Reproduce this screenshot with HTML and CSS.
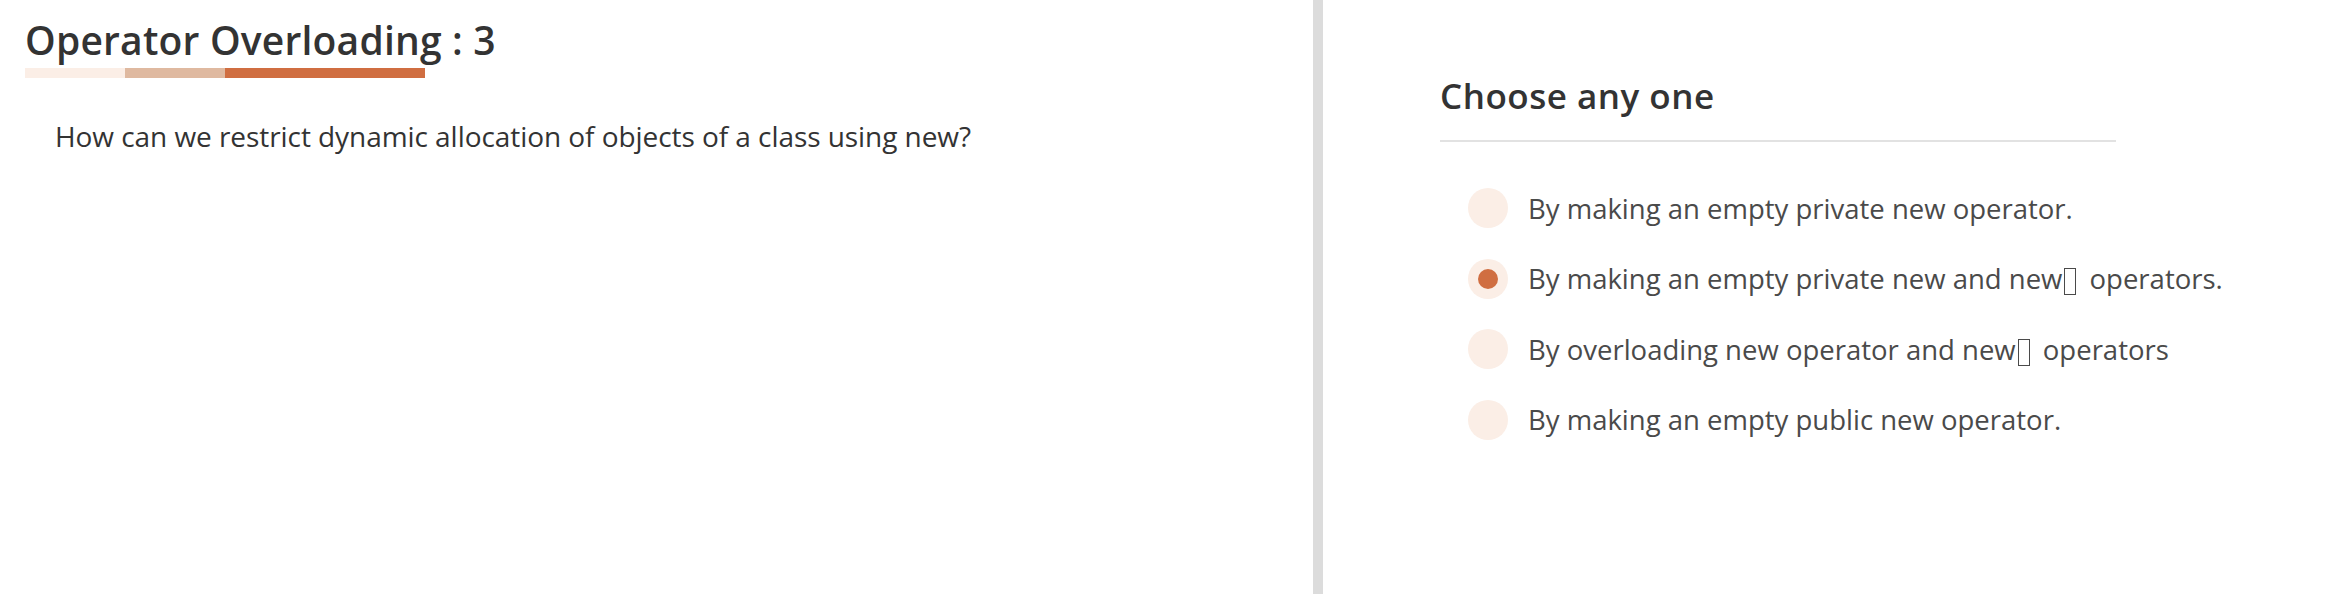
FILE: index.html
```html
<!DOCTYPE html>
<html lang="en">
<head>
<meta charset="utf-8">
<title>Operator Overloading : 3</title>
<link rel="stylesheet" href="styles.css">
</head>
<body>
<div class="page">
  <section class="question-panel">
    <h1 class="title">Operator Overloading : 3</h1>
    <div class="progress">
      <span class="seg seg-light"></span>
      <span class="seg seg-mid"></span>
      <span class="seg seg-dark"></span>
    </div>
    <p class="question">How can we restrict dynamic allocation of objects of a class using new?</p>
  </section>
  <div class="divider"></div>
  <section class="answer-panel">
    <h2 class="choose">Choose any one</h2>
    <div class="rule"></div>
    <ul class="options">
      <li class="option"><span class="radio"></span><span class="label">By making an empty private new operator.</span></li>
      <li class="option selected"><span class="radio"><span class="dot"></span></span><span class="label">By making an empty private new and new<span class="tofu"></span> operators.</span></li>
      <li class="option"><span class="radio"></span><span class="label">By overloading new operator and new<span class="tofu"></span> operators</span></li>
      <li class="option"><span class="radio"></span><span class="label">By making an empty public new operator.</span></li>
    </ul>
  </section>
</div>
</body>
</html>
```

FILE: styles.css
```css
html, body {
  margin: 0;
  padding: 0;
  background: #ffffff;
}
body {
  font-family: "Open Sans", "Noto Sans", sans-serif;
  color: #333333;
}
.page {
  display: flex;
  height: 594px;
}
.question-panel {
  width: 1313px;
  box-sizing: border-box;
  padding: 20px 0 0 25px;
}
.title {
  margin: 0;
  font-size: 39px;
  line-height: 39px;
  font-weight: 600;
  color: #333333;
  letter-spacing: 0.2px;
}
.progress {
  display: flex;
  margin-top: 9px;
  height: 10px;
}
.seg { height: 10px; }
.seg-light { width: 100px; background: #fbeee6; }
.seg-mid { width: 100px; background: #dfb9a0; }
.seg-dark { width: 200px; background: #d06e41; }
.question {
  margin: 39.5px 0 0 30px;
  font-size: 28px;
  line-height: 36px;
  color: #333333;
  letter-spacing: -0.06px;
}
.divider {
  width: 10px;
  background: #dcdcdc;
  flex: none;
}
.answer-panel {
  flex: 1;
  padding: 75px 0 0 117px;
}
.choose {
  margin: 0;
  font-size: 35px;
  line-height: 42px;
  font-weight: 600;
  color: #333333;
  letter-spacing: 0.5px;
}
.rule {
  width: 676px;
  height: 2px;
  background: #e2e2e2;
  margin-top: 23px;
}
.options {
  list-style: none;
  margin: 46px 0 0 28px;
  padding: 0;
  display: flex;
  flex-direction: column;
  gap: 30.5px;
}
.option {
  display: flex;
  align-items: center;
  gap: 20px;
  height: 40px;
}
.radio {
  width: 40px;
  height: 40px;
  border-radius: 50%;
  background: #fbeee6;
  display: flex;
  align-items: center;
  justify-content: center;
  flex: none;
}
.dot {
  width: 20px;
  height: 20px;
  border-radius: 50%;
  background: #d06e41;
}
.label {
  font-size: 27.5px;
  color: #4a4a4a;
  letter-spacing: 0;
}
.tofu {
  display: inline-block;
  width: 10px;
  height: 25px;
  border: 1.5px solid #4a4a4a;
  vertical-align: -6px;
  margin: 0 6px 0 2px;
}
```
